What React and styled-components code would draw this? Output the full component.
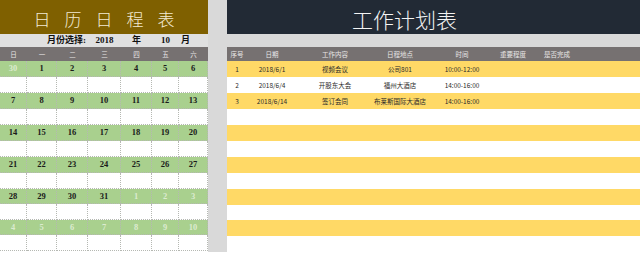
import React from 'react';
import styled, { createGlobalStyle } from 'styled-components';

const GlobalStyle = createGlobalStyle`
    body {
        margin: 0;
        background: #ffffff;
        font-family: "Noto Sans CJK SC", "Noto Sans", sans-serif;
    }
`;

const Sheet = styled.div`
    display: grid;
    grid-template-columns: 208px 19px 413px;
    align-items: start;
    width: 640px;
    height: 256px;
    overflow: hidden;
`;

const Panel = styled.div`
    display: flex;
    flex-direction: column;
`;

const Gutter = styled.div`
    height: 252px;
    background: #d9d9d9;
`;

const Title = styled.div`
    height: 34px;
    box-sizing: border-box;
    display: flex;
    align-items: center;
    justify-content: ${(p) => (p.$left ? 'flex-start' : 'center')};
    padding-top: 3px;
    padding-left: ${(p) => (p.$left ? '125px' : '0')};
    background: ${(p) => p.$bg};
    color: ${(p) => p.$color};
    font-size: ${(p) => p.$size}px;
    font-weight: 300;
    letter-spacing: ${(p) => p.$spacing}px;
    text-indent: ${(p) => p.$spacing}px;
    white-space: pre;
`;

const SubBar = styled.div`
    height: 13px;
    background: #d9d9d9;
`;

const CalGrid = styled.div`
    display: grid;
    grid-template-columns: 27px 30px 31px 33px 31px 27px 29px;
`;

const MonthRow = styled(CalGrid)`
    height: 13px;
    background: #e0e0e0;
    font-family: "Liberation Serif", "Noto Sans CJK SC", serif;
    font-weight: bold;
    font-size: 9px;
    line-height: 13px;
    color: #111;
`;

const MonthCell = styled.div`
    grid-column: span ${(p) => p.$span || 1};
    text-align: ${(p) => p.$align || 'center'};
    padding-left: ${(p) => p.$pl || 0}px;
    padding-right: ${(p) => p.$pr || 0}px;
`;

const HeadRow = styled.div`
    display: grid;
    grid-template-columns: ${(p) => p.$cols};
    height: 14px;
    background: #767171;
    color: #e8e6e6;
    font-size: 6.5px;
    line-height: 14px;
    text-align: center;
`;

const DayCell = styled.div`
    box-sizing: border-box;
    height: ${(p) => (p.$tall ? 16 : 15.6)}px;
    border-right: 1px dotted #b5b8b2;
    border-bottom: 1px dotted #b5b8b2;
    background: ${(p) => (p.$green ? '#a9d08e' : '#ffffff')};
    color: ${(p) => (p.$muted ? '#dcebd0' : '#1a1a1a')};
    font-family: "Liberation Serif", serif;
    font-weight: bold;
    font-size: 8.5px;
    line-height: 15px;
    text-align: center;
`;

const TaskRow = styled.div`
    display: grid;
    grid-template-columns: 20px 50px 76px 54px 70px 32px 56px 55px;
    height: ${(p) => (p.$tall ? 16 : 15.6)}px;
    background: ${(p) => (p.$yellow ? '#ffd966' : '#ffffff')};
    color: #2b2b2b;
    font-size: 6.5px;
    line-height: 16px;
    text-align: center;
`;

const weekdays = ['日', '一', '二', '三', '四', '五', '六'];
const weeks = [
    [30, 1, 2, 3, 4, 5, 6],
    [7, 8, 9, 10, 11, 12, 13],
    [14, 15, 16, 17, 18, 19, 20],
    [21, 22, 23, 24, 25, 26, 27],
    [28, 29, 30, 31, 1, 2, 3],
    [4, 5, 6, 7, 8, 9, 10],
];

const tasks = [
    ['1', '2018/6/1', '视频会议', '公司801', '10:00-12:00'],
    ['2', '2018/6/4', '开股东大会', '福州大酒店', '14:00-16:00'],
    ['3', '2018/6/14', '签订会同', '布莱斯国际大酒店', '14:00-16:00'],
];

// days outside October are drawn pale
const isMuted = (w, d) => (w === 0 && d === 0) || (w === 4 && d >= 4) || w === 5;

const App = () => {
    return (
        <>
            <GlobalStyle />
            <Sheet>
                <Panel>
                    <Title $bg="#7f6000" $color="#f3ead2" $size={17} $spacing={14}>
                        日历日程表
                    </Title>
                    <MonthRow>
                        <MonthCell $span={3} $align="right" $pr={2}>月份选择:</MonthCell>
                        <MonthCell>2018</MonthCell>
                        <MonthCell>年</MonthCell>
                        <MonthCell>10</MonthCell>
                        <MonthCell $align="left" $pl={2}>月</MonthCell>
                    </MonthRow>
                    <HeadRow $cols="27px 30px 31px 33px 31px 27px 29px">
                        {weekdays.map((d) => (
                            <div key={d}>{d}</div>
                        ))}
                    </HeadRow>
                    <CalGrid>
                        {weeks.map((week, w) => (
                            <React.Fragment key={w}>
                                {week.map((d, i) => (
                                    <DayCell key={`d${i}`} $green $tall={w < 4} $muted={isMuted(w, i)}>
                                        {d}
                                    </DayCell>
                                ))}
                                {week.map((d, i) => (
                                    <DayCell key={`e${i}`} $tall={w < 3} />
                                ))}
                            </React.Fragment>
                        ))}
                    </CalGrid>
                </Panel>
                <Gutter />
                <Panel>
                    <Title $left $bg="#222a35" $color="#f4f4f4" $size={21} $spacing={0}>
                        工作计划表
                    </Title>
                    <SubBar />
                    <HeadRow $cols="20px 50px 76px 54px 70px 32px 56px 55px">
                        <div>序号</div>
                        <div>日期</div>
                        <div>工作内容</div>
                        <div>日程地点</div>
                        <div>时间</div>
                        <div>重要程度</div>
                        <div>是否完成</div>
                        <div />
                    </HeadRow>
                    {Array.from({ length: 12 }).map((_, r) => (
                        <TaskRow key={r} $yellow={r % 2 === 0} $tall={r < 8}>
                            {tasks[r] && tasks[r].map((c, i) => <div key={i}>{c}</div>)}
                        </TaskRow>
                    ))}
                </Panel>
            </Sheet>
        </>
    );
};

export default App;
